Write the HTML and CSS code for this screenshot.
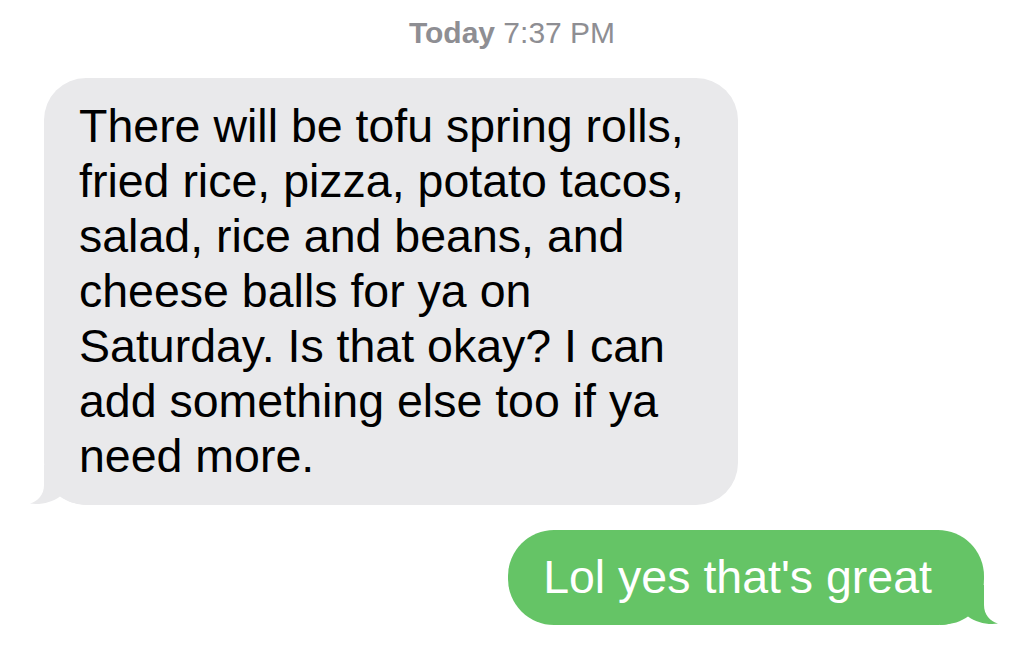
FILE: index.html
```html
<!DOCTYPE html>
<html lang="en">
<head>
<meta charset="utf-8">
<title>Messages</title>
<link rel="stylesheet" href="styles.css">
</head>
<body>
<main class="thread">
  <div class="timestamp"><b>Today</b> 7:37 PM</div>
  <div class="row row-in">
    <div class="bubble bubble-in">
      There will be tofu spring rolls,<br>fried rice, pizza, potato tacos,<br>salad, rice and beans, and<br>cheese balls for ya on<br>Saturday. Is that okay? I can<br>add something else too if ya<br>need more.
      <svg class="tail tail-in" width="60" height="40" viewBox="0 0 60 40" aria-hidden="true"><path d="M16 0 L16 20 C16 30 10 36 2 38.6 C12 40.2 24 37.5 32 31.5 C39 36.5 47 39.4 60 40 L60 0 Z"/></svg>
    </div>
  </div>
  <div class="row row-out">
    <div class="bubble bubble-out">
      Lol yes that's great
      <svg class="tail tail-out" width="60" height="40" viewBox="0 0 60 40" aria-hidden="true"><path d="M16 0 L16 20 C16 30 10 36 2 38.6 C12 40.2 24 37.5 32 31.5 C39 36.5 47 39.4 60 40 L60 0 Z"/></svg>
    </div>
  </div>
</main>
</body>
</html>
```

FILE: styles.css
```css
html, body {
  margin: 0;
  padding: 0;
  background: #ffffff;
}

body {
  font-family: "Liberation Sans", Arial, sans-serif;
  width: 1024px;
  height: 645px;
  overflow: hidden;
}

.thread {
  display: flex;
  flex-direction: column;
  padding-top: 16px;
}

.timestamp {
  text-align: center;
  font-size: 30px;
  line-height: 34px;
  color: #8e8e93;
}

.timestamp b {
  font-weight: 700;
}

.row {
  display: flex;
}

.row-in {
  margin-top: 28px;
  padding-left: 44px;
}

.row-out {
  margin-top: 25px;
  justify-content: flex-end;
  padding-right: 40px;
}

.bubble {
  position: relative;
  isolation: isolate;
  font-size: 46.5px;
  line-height: 55px;
  border-radius: 42px;
}

.bubble-in {
  width: 694px;
  box-sizing: border-box;
  padding: 21px 20px 21px 35px;
  background: #e9e9eb;
  color: #000000;
}

.bubble-out {
  padding: 20px 52px 20px 35px;
  background: #65c466;
  color: #ffffff;
  border-radius: 46px;
}

.tail {
  position: absolute;
  bottom: 0;
  z-index: -1;
}

.tail-in {
  left: -16px;
  fill: #e9e9eb;
}

.tail-out {
  right: -16px;
  fill: #65c466;
  transform: scaleX(-1);
}
```
